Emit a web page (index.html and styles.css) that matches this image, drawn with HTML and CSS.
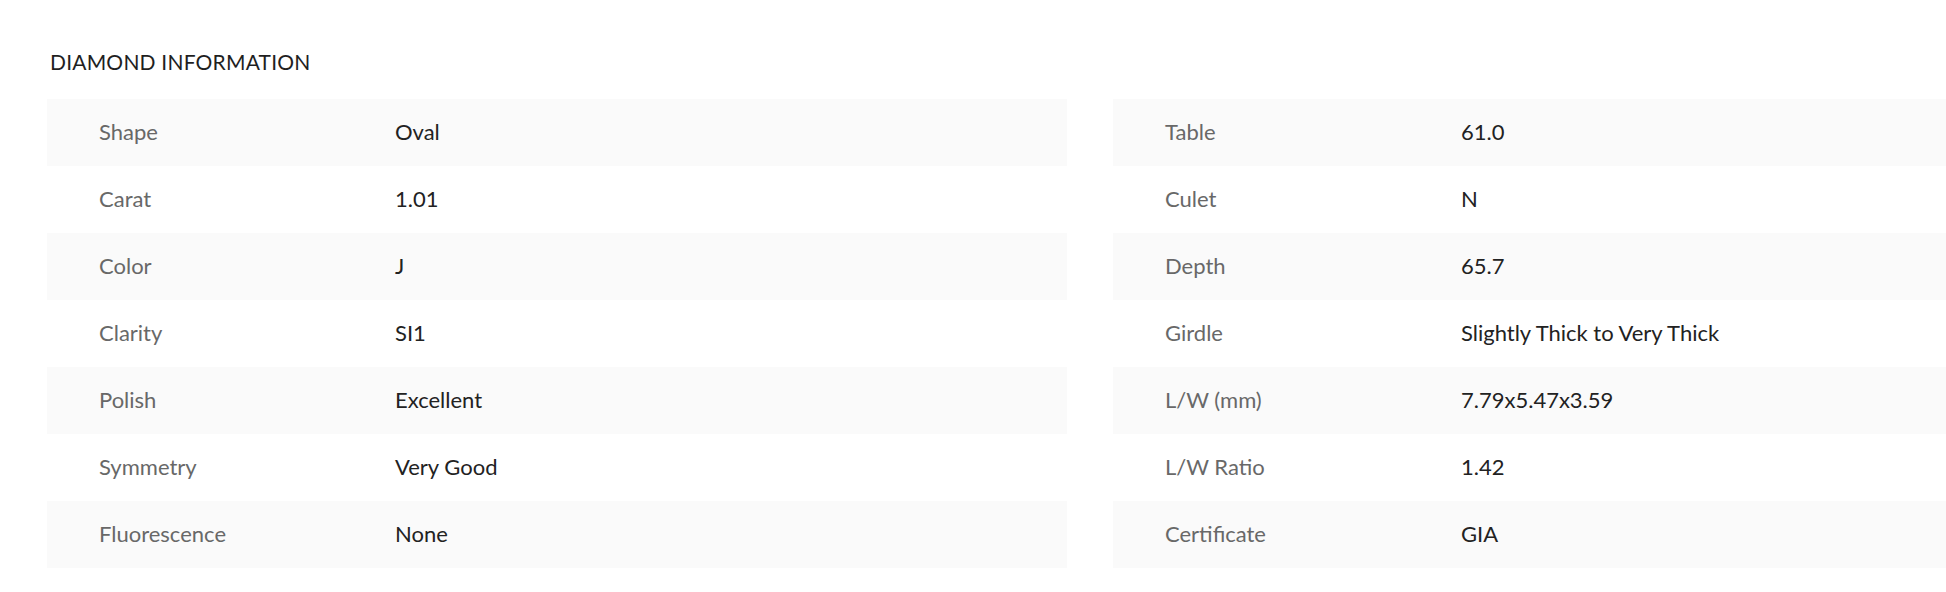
FILE: index.html
```html
<!DOCTYPE html>
<html lang="en">
<head>
<meta charset="utf-8">
<title>Diamond Information</title>
<link rel="stylesheet" href="styles.css">
</head>
<body>
<section class="info">
  <h2 class="info-title">DIAMOND INFORMATION</h2>
  <div class="info-grid">
    <div class="spec-table">
      <div class="spec-row"><span class="spec-label">Shape</span><span class="spec-value">Oval</span></div>
      <div class="spec-row"><span class="spec-label">Carat</span><span class="spec-value">1.01</span></div>
      <div class="spec-row"><span class="spec-label">Color</span><span class="spec-value">J</span></div>
      <div class="spec-row"><span class="spec-label">Clarity</span><span class="spec-value">SI1</span></div>
      <div class="spec-row"><span class="spec-label">Polish</span><span class="spec-value">Excellent</span></div>
      <div class="spec-row"><span class="spec-label">Symmetry</span><span class="spec-value">Very Good</span></div>
      <div class="spec-row"><span class="spec-label">Fluorescence</span><span class="spec-value">None</span></div>
    </div>
    <div class="spec-table">
      <div class="spec-row"><span class="spec-label">Table</span><span class="spec-value">61.0</span></div>
      <div class="spec-row"><span class="spec-label">Culet</span><span class="spec-value">N</span></div>
      <div class="spec-row"><span class="spec-label">Depth</span><span class="spec-value">65.7</span></div>
      <div class="spec-row"><span class="spec-label">Girdle</span><span class="spec-value">Slightly Thick to Very Thick</span></div>
      <div class="spec-row"><span class="spec-label">L/W (mm)</span><span class="spec-value">7.79x5.47x3.59</span></div>
      <div class="spec-row"><span class="spec-label">L/W Ratio</span><span class="spec-value">1.42</span></div>
      <div class="spec-row"><span class="spec-label">Certificate</span><span class="spec-value">GIA</span></div>
    </div>
  </div>
</section>
</body>
</html>
```
FILE: styles.css
```css
html, body {
  margin: 0;
  padding: 0;
  background: #ffffff;
  overflow: hidden;
}
body {
  font-family: "Lato", "Noto Sans", sans-serif;
  color: #222222;
}
.info {
  padding: 48px 0 0 47px;
}
.info-title {
  margin: 0 0 0 3px;
  font-size: 21px;
  font-weight: 400;
  line-height: 28px;
  color: #1f1f1f;
  letter-spacing: 0.2px;
}
.info-grid {
  margin-top: 23px;
  display: grid;
  grid-template-columns: 1020px 1020px;
  column-gap: 46px;
  width: 2086px;
}
.spec-row {
  display: flex;
  align-items: center;
  box-sizing: border-box;
  height: 67px;
  padding: 0 0 2px 52px;
}
.spec-row:nth-child(odd) {
  background: #fafafa;
}
.spec-label {
  width: 296px;
  flex: none;
  font-size: 22px;
  color: #686868;
}
.spec-value {
  font-size: 22px;
  color: #222222;
}
```
